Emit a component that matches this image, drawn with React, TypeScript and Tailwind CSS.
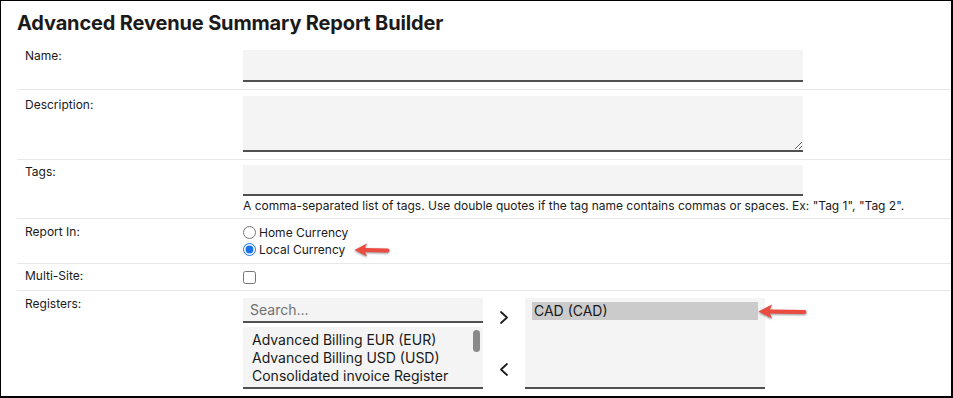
import type { ReactNode } from "react";

function Row({
  label,
  labelPad,
  fieldPad,
  children,
}: {
  label: string;
  labelPad: string;
  fieldPad: string;
  children: ReactNode;
}) {
  return (
    <div className="flex border-b border-[#e8e8e8]">
      <div className={`w-[226px] shrink-0 pl-[8px] text-[12px] leading-4 ${labelPad}`}>{label}</div>
      <div className={`flex-1 ${fieldPad}`}>{children}</div>
    </div>
  );
}

function RedArrow({ length, head }: { length: number; head: number }) {
  const h = head + 1;
  const mid = h / 2;
  return (
    <svg width={length} height={h} viewBox={`0 0 ${length} ${h}`} className="drop-shadow-[0_1px_1px_rgba(0,0,0,0.45)]">
      <line x1={head - 2} y1={mid} x2={length - 2.5} y2={mid + 0.5} stroke="#ec4b40" strokeWidth="3.8" strokeLinecap="round" />
      <path d={`M0.5 ${mid} L${head} 0.5 L${head - 3} ${mid} L${head} ${h - 0.5} Z`} fill="#ec4b40" />
    </svg>
  );
}

function Chevron({ dir }: { dir: "right" | "left" }) {
  return (
    <svg width="10" height="13" viewBox="0 0 10 13" fill="none" stroke="#1a1a1a" strokeWidth="1.7" strokeLinecap="round" strokeLinejoin="round">
      {dir === "right" ? <polyline points="2,1 8,6.5 2,12" /> : <polyline points="8,1 2,6.5 8,12" />}
    </svg>
  );
}

export default function App() {
  const registers = [
    "Advanced Billing EUR (EUR)",
    "Advanced Billing USD (USD)",
    "Consolidated invoice Register",
    "(USD)",
  ];

  return (
    <div className="relative w-[953px] h-[398px] overflow-hidden bg-white border-l border-t border-r-2 border-b-2 border-black font-['Inter',sans-serif] text-[#1a1a1a]">
      {/* Title */}
      <h1 className="h-[39px] pl-[16px] pt-[9px] text-[20px] leading-[26px] font-bold tracking-[-0.15px]">
        Advanced Revenue Summary Report Builder
      </h1>

      <div className="ml-[16px]">
        <Row label="Name:" labelPad="pt-[8px]" fieldPad="pt-[10px] pb-[7px]">
          <input type="text" className="block w-[560px] h-[32px] bg-[#f4f4f4] border-b-2 border-[#505050] outline-none" />
        </Row>

        <Row label="Description:" labelPad="pt-[7px]" fieldPad="pt-[6px] pb-[7px]">
          <textarea className="block w-[560px] h-[56px] bg-[#f4f4f4] border-b-2 border-[#505050] outline-none" />
        </Row>

        <Row label="Tags:" labelPad="pt-[4px]" fieldPad="pt-[5px] pb-[4px]">
          <input type="text" className="block w-[560px] h-[31px] bg-[#f4f4f4] border-b-2 border-[#505050] outline-none" />
          <p className="mt-[2px] text-[12px] leading-4">
            A comma-separated list of tags. Use double quotes if the tag name contains commas or spaces. Ex: "Tag 1", "Tag 2".
          </p>
        </Row>

        <Row label="Report In:" labelPad="pt-[5px]" fieldPad="pt-[5px] pb-[5px]">
          <label className="flex items-center gap-[3px] h-[17px] text-[12px]">
            <input type="radio" name="currency" className="m-0 w-[13px] h-[13px] accent-[#1a73e8]" />
            Home Currency
          </label>
          <label className="flex items-center gap-[3px] h-[17px] text-[12px]">
            <input type="radio" name="currency" defaultChecked className="m-0 w-[13px] h-[13px] accent-[#1a73e8]" />
            Local Currency
          </label>
        </Row>

        <Row label="Multi-Site:" labelPad="pt-[4px]" fieldPad="pt-[7px] pb-[6px]">
          <input type="checkbox" className="block m-0 w-[13px] h-[13px]" />
        </Row>

        <Row label="Registers:" labelPad="pt-[5px]" fieldPad="pt-[7px] pb-[10px]">
          <div className="flex items-start">
            <div className="w-[240px]">
              <input
                type="text"
                placeholder="Search..."
                className="block w-full h-[25px] px-[7px] bg-[#f4f4f4] border-b-2 border-[#505050] text-[14px] placeholder:text-[#707070] outline-none"
              />
              <div className="mt-[4px] flex h-[62px] overflow-hidden bg-[#f4f4f4] border-b-2 border-[#505050]">
                <div className="flex-1 pl-[9px] pt-[4px] text-[14px] leading-[18px]">
                  {registers.map((r) => (
                    <div key={r} className="whitespace-nowrap">{r}</div>
                  ))}
                </div>
                <div className="mt-[3px] mr-[3px] w-[7px] h-[22px] rounded-full bg-[#8a8a8a]" />
              </div>
            </div>

            <div className="w-[42px] h-[91px] flex flex-col items-center pt-[13px] gap-[39px]">
              <Chevron dir="right" />
              <Chevron dir="left" />
            </div>

            <div className="w-[240px] h-[91px] bg-[#f4f4f4] border-b-2 border-[#505050] px-[7px] pt-[4px]">
              <div className="h-[18px] pl-[2px] bg-[#cbcbcb] text-[14px] leading-[18px]">CAD (CAD)</div>
            </div>
          </div>
        </Row>
      </div>

      {/* Callout arrows */}
      <div className="absolute left-[353px] top-[242px]">
        <RedArrow length={36} head={13} />
      </div>
      <div className="absolute left-[757px] top-[303px]">
        <RedArrow length={49} head={14} />
      </div>
    </div>
  );
}
